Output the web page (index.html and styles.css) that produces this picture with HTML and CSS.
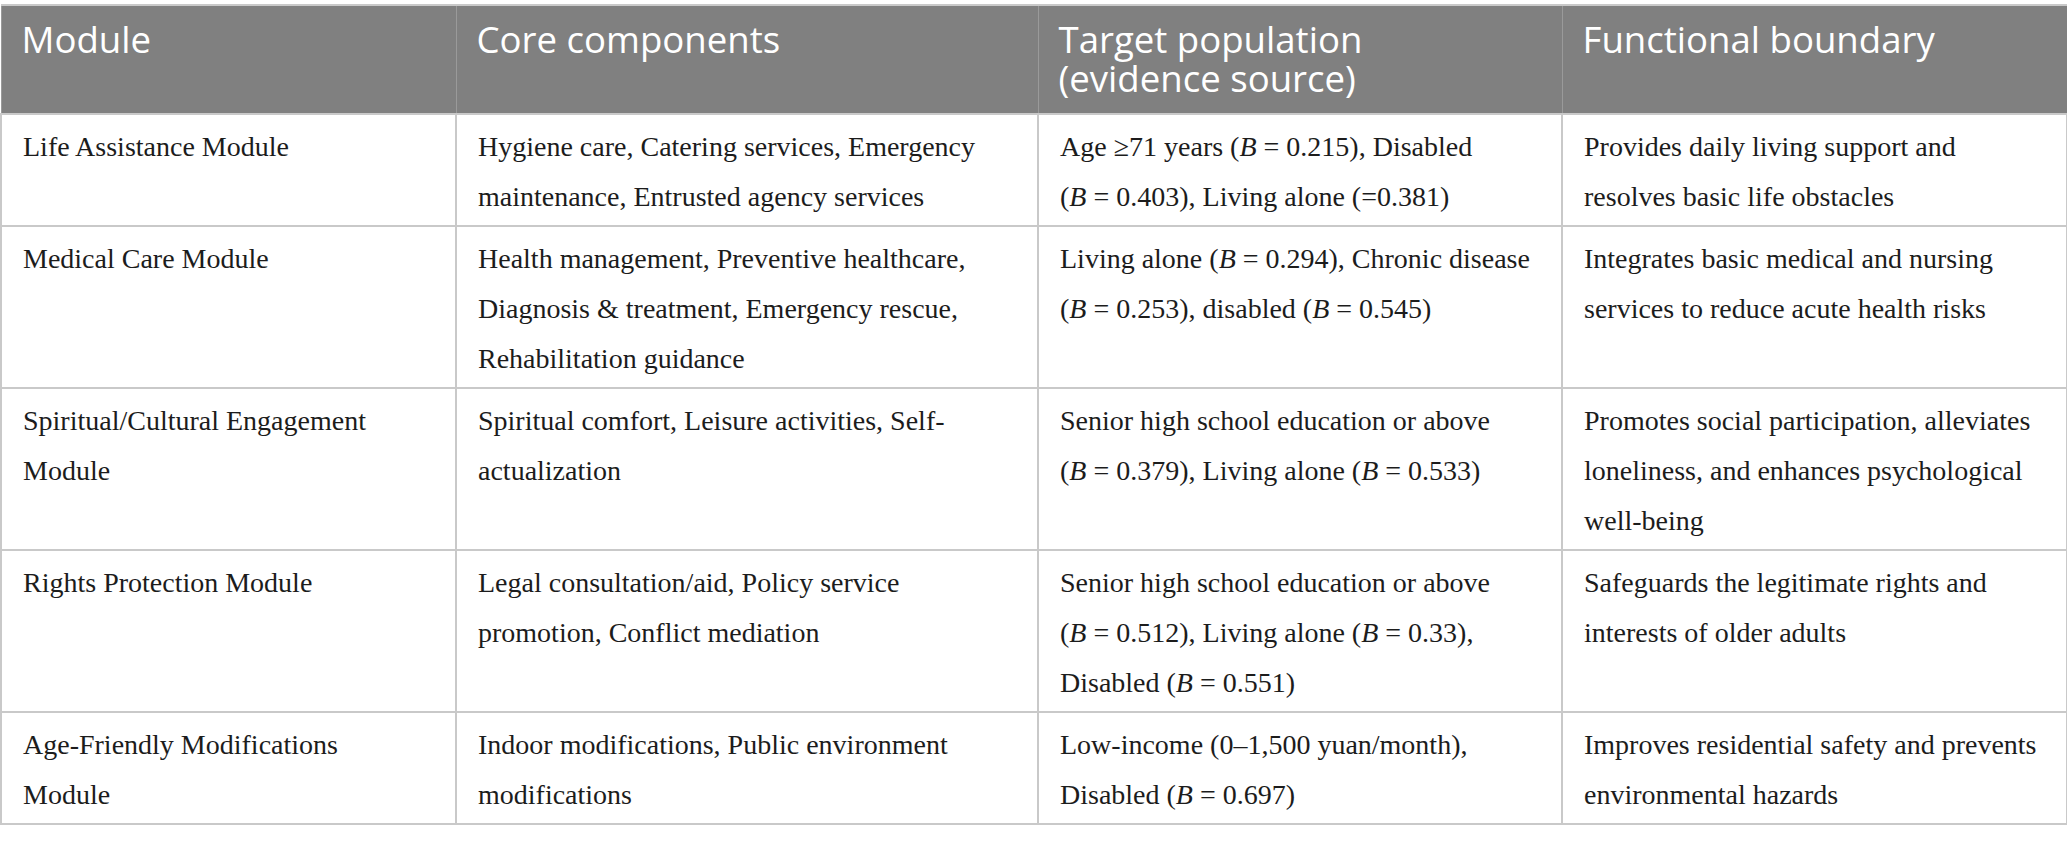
FILE: index.html
```html
<!DOCTYPE html>
<html lang="en">
<head>
<meta charset="utf-8">
<title>Service modules</title>
<link rel="stylesheet" href="styles.css">
</head>
<body>
<table class="grid">
  <colgroup>
    <col class="c1"><col class="c2"><col class="c3"><col class="c4">
  </colgroup>
  <thead>
    <tr>
      <th>Module</th>
      <th>Core components</th>
      <th>Target population<br>(evidence source)</th>
      <th>Functional boundary</th>
    </tr>
  </thead>
  <tbody>
    <tr>
      <td class="name">Life Assistance Module</td>
      <td>Hygiene care, Catering services, Emergency maintenance, Entrusted agency services</td>
      <td>Age <span class="ge">≥</span>71 years (<i>B</i>&nbsp;=&nbsp;0.215), Disabled (<i>B</i>&nbsp;=&nbsp;0.403), Living alone (=0.381)</td>
      <td>Provides daily living support and resolves basic life obstacles</td>
    </tr>
    <tr>
      <td class="name">Medical Care Module</td>
      <td>Health management, Preventive healthcare, Diagnosis &amp; treatment, Emergency rescue, Rehabilitation guidance</td>
      <td>Living alone (<i>B</i>&nbsp;=&nbsp;0.294), Chronic disease (<i>B</i>&nbsp;=&nbsp;0.253), disabled (<i>B</i>&nbsp;=&nbsp;0.545)</td>
      <td>Integrates basic medical and nursing services to reduce acute health risks</td>
    </tr>
    <tr>
      <td class="name">Spiritual/Cultural Engagement Module</td>
      <td>Spiritual comfort, Leisure activities, Self-actualization</td>
      <td>Senior high school education or above (<i>B</i>&nbsp;=&nbsp;0.379), Living alone (<i>B</i>&nbsp;=&nbsp;0.533)</td>
      <td>Promotes social participation, alleviates loneliness, and enhances psychological well-being</td>
    </tr>
    <tr>
      <td class="name">Rights Protection Module</td>
      <td>Legal consultation/aid, Policy service promotion, Conflict mediation</td>
      <td>Senior high school education or above (<i>B</i>&nbsp;=&nbsp;0.512), Living alone (<i>B</i>&nbsp;=&nbsp;0.33), Disabled (<i>B</i>&nbsp;=&nbsp;0.551)</td>
      <td>Safeguards the legitimate rights and interests of older adults</td>
    </tr>
    <tr>
      <td class="name">Age-Friendly Modifications Module</td>
      <td>Indoor modifications, Public environment modifications</td>
      <td>Low-income (0–1,500 yuan/month), Disabled (<i>B</i>&nbsp;=&nbsp;0.697)</td>
      <td>Improves residential safety and prevents environmental hazards</td>
    </tr>
  </tbody>
</table>
</body>
</html>
```

FILE: styles.css
```css
html, body {
  margin: 0;
  padding: 0;
  background: #ffffff;
}

body {
  padding-top: 4px;
}

.grid {
  width: 2066px;
  border-collapse: collapse;
  table-layout: fixed;
  border-top: 2px solid #c9c9c9;
}

.c1 { width: 455px; }
.c2 { width: 582px; }
.c3 { width: 524px; }
.c4 { width: 505px; }

.grid th {
  background: #808080;
  color: #ffffff;
  font-family: "Open Sans", "Noto Sans", sans-serif;
  font-weight: 400;
  font-size: 36.6px;
  line-height: 39px;
  text-align: left;
  vertical-align: top;
  padding: 14px 16px 15px 20px;
  border-left: 1px solid #9a9a9a;
  border-right: 1px solid #9a9a9a;
}

.grid td {
  font-family: "Liberation Serif", "Times New Roman", serif;
  font-size: 28px;
  line-height: 50px;
  color: #1c1c1c;
  vertical-align: top;
  padding: 7px 16px 3px 21px;
  border: 2px solid #c9c9c9;
}

.grid td.name {
  padding-right: 30px;
}

.grid td i {
  font-style: italic;
}

.ge {
  text-decoration: none;
}
```
